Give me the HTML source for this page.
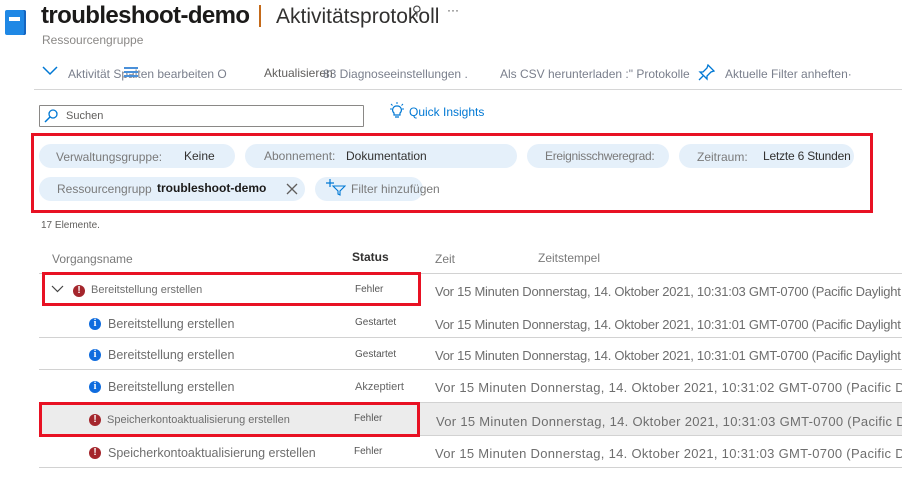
<!DOCTYPE html>
<html><head><meta charset="utf-8"><style>
*{margin:0;padding:0;box-sizing:border-box}
html,body{width:902px;height:486px;overflow:hidden}
body{background:#fff;font-family:"Liberation Sans","DejaVu Sans",sans-serif;position:relative;color:#605e5c}
#w{position:absolute;left:0;top:0;width:902px;height:486px;overflow:hidden}
.a{position:absolute;white-space:nowrap}
.pill{position:absolute;height:24px;background:#e5f0fa;border-radius:12px}
.line{position:absolute;left:39px;right:0;height:1px;background:#d2d2d2}
.red{position:absolute;border:3px solid #e81123}
.ts{font-size:13px;color:#6e6e6e;letter-spacing:-0.25px}
.ts2{font-size:13px;color:#6e6e6e;letter-spacing:0.3px}
.nm{font-size:12.5px;color:#6e6e6e}
.st{font-size:10px;color:#555}
.ic{position:absolute;width:12px;height:12px;border-radius:50%;color:#fff;font-size:10px;font-weight:bold;text-align:center;line-height:12px;font-family:"Liberation Serif",serif}
.err{background:#a4262c;font-family:"Liberation Sans",sans-serif}
.inf{background:#0f6cde}
</style></head><body><div id="w">
<div class="a" style="left:5px;top:10px;width:21px;height:25px;background:#1f88e5;border-radius:2px;box-shadow:inset -2px 0 0 #1565c0"></div>
<div class="a" style="left:9px;top:17px;width:11px;height:4px;background:#fff"></div>
<div class="a" style="left:41px;top:2px;font-size:24px;font-weight:bold;color:#1b1a19;letter-spacing:-0.6px">troubleshoot-demo</div>
<div class="a" style="left:259px;top:5px;width:2px;height:22px;background:#c46a1a"></div>
<div class="a" style="left:276px;top:5px;font-size:21px;color:#323130">Aktivitätsprotokoll</div>
<div class="a" style="left:412px;top:3px;font-size:13px;color:#444">⚲</div>
<div class="a" style="left:447px;top:3px;font-size:12px;color:#444">···</div>
<div class="a" style="left:42px;top:33px;font-size:12px;color:#8a8886">Ressourcengruppe</div>

<svg class="a" style="left:42px;top:66px" width="16" height="10"><path d="M1 1 L8 8 L15 1" stroke="#0078d4" stroke-width="1.5" fill="none"/></svg>
<div class="a" style="left:68px;top:67px;font-size:12px;color:#7a7f8c">Aktivität Spalten bearbeiten O</div>
<div class="a" style="left:124px;top:67px;width:14px;height:2px;background:#4a90d9;box-shadow:0 4px 0 #4a90d9,0 8px 0 #4a90d9"></div>
<div class="a" style="left:264px;top:66px;font-size:12px;color:#605e5c">Aktualisieren</div>
<div class="a" style="left:323px;top:67px;font-size:12px;color:#7a7f8c">83 Diagnoseeinstellungen .</div>
<div class="a" style="left:500px;top:67px;font-size:12px;color:#7a7f8c">Als CSV herunterladen :" Protokolle</div>
<svg class="a" style="left:698px;top:64px" width="17" height="17"><path d="M10 1 L16 7 L13 8 L9 12 L9 15 L2 8 L5 8 L9 4 Z M5 12 L1 16" stroke="#0078d4" stroke-width="1.3" fill="none"/></svg>
<div class="a" style="left:725px;top:67px;font-size:12px;color:#7a7f8c">Aktuelle Filter anheften·</div>
<div class="a" style="left:34px;top:89px;width:868px;height:1px;background:#d6d6d6"></div>

<div class="a" style="left:39px;top:105px;width:325px;height:22px;border:1px solid #8a8886;border-radius:1px"></div>
<svg class="a" style="left:44px;top:109px" width="14" height="14"><circle cx="9" cy="5" r="4" stroke="#0078d4" stroke-width="1.3" fill="none"/><path d="M6 8 L1 13" stroke="#0078d4" stroke-width="1.5"/></svg>
<div class="a" style="left:66px;top:110px;font-size:11px;color:#605e5c">Suchen</div>
<svg class="a" style="left:388px;top:102px" width="18" height="18"><path d="M9 4 a4 4 0 0 1 3 7 v2 h-6 v-2 a4 4 0 0 1 3 -7 Z M7 15 h4" stroke="#0078d4" stroke-width="1.2" fill="none"/><path d="M9 0v2 M2 7h2 M14 7h2 M3 2l1.5 1.5 M15 2l-1.5 1.5" stroke="#0078d4" stroke-width="1"/></svg>
<div class="a" style="left:409px;top:105px;font-size:12px;color:#0078d4">Quick Insights</div>

<div class="red" style="left:31px;top:133px;width:842px;height:80px"></div>
<div class="pill" style="left:39px;top:144px;width:196px"></div>
<div class="a" style="left:56px;top:150px;font-size:12px;color:#7a7a7a">Verwaltungsgruppe:</div>
<div class="a" style="left:184px;top:149px;font-size:12px;color:#323130">Keine</div>
<div class="pill" style="left:245px;top:144px;width:272px"></div>
<div class="a" style="left:264px;top:149px;font-size:12px;color:#7a7a7a">Abonnement:</div>
<div class="a" style="left:346px;top:149px;font-size:12px;color:#323130">Dokumentation</div>
<div class="pill" style="left:527px;top:144px;width:142px"></div>
<div class="a" style="left:545px;top:149px;font-size:12px;color:#7a7a7a;letter-spacing:-0.3px">Ereignisschweregrad:</div>
<div class="pill" style="left:679px;top:144px;width:175px"></div>
<div class="a" style="left:697px;top:150px;font-size:12px;color:#7a7a7a">Zeitraum:</div>
<div class="a" style="left:763px;top:149px;font-size:12px;color:#323130;letter-spacing:-0.2px">Letzte 6 Stunden</div>
<div class="pill" style="left:39px;top:177px;width:266px"></div>
<div class="a" style="left:57px;top:182px;font-size:12px;color:#7a7a7a">Ressourcengrupp</div>
<div class="a" style="left:157px;top:181px;font-size:12px;font-weight:bold;color:#1b1a19">troubleshoot-demo</div>
<svg class="a" style="left:286px;top:183px" width="12" height="12"><path d="M1 1L11 11M11 1L1 11" stroke="#605e5c" stroke-width="1.3"/></svg>
<div class="pill" style="left:315px;top:177px;width:108px"></div>
<svg class="a" style="left:326px;top:178px" width="20" height="18"><path d="M4 1v8M0 5h8" stroke="#0078d4" stroke-width="1.2"/><path d="M7 8h12l-5 5v4l-2-1v-3z" stroke="#0078d4" stroke-width="1.1" fill="none"/></svg>
<div class="a" style="left:351px;top:182px;font-size:12px;color:#7a7a7a">Filter hinzufügen</div>

<div class="a" style="left:41px;top:220px;font-size:10px;color:#605e5c">17 Elemente.</div>
<div class="a" style="left:52px;top:252px;font-size:12px;color:#7a7a7a">Vorgangsname</div>
<div class="a" style="left:352px;top:250px;font-size:12px;font-weight:bold;color:#323130">Status</div>
<div class="a" style="left:435px;top:252px;font-size:12px;color:#7a7a7a">Zeit</div>
<div class="a" style="left:538px;top:251px;font-size:12px;color:#7a7a7a">Zeitstempel</div>

<div class="line" style="top:273px"></div>
<div class="line" style="top:337px"></div>
<div class="line" style="top:369px"></div>
<div class="line" style="top:402px"></div>
<div class="line" style="top:435px"></div>
<div class="line" style="top:467px"></div>
<div class="a" style="left:39px;top:403px;width:863px;height:32px;background:#ececec"></div>

<svg class="a" style="left:51px;top:285px" width="13" height="8"><path d="M1 1L6.5 6.5L12 1" stroke="#444" stroke-width="1.2" fill="none"/></svg>
<div class="ic err" style="left:73px;top:285px">!</div>
<div class="a nm" style="left:91px;top:284px;font-size:11px">Bereitstellung erstellen</div>
<div class="a st" style="left:355px;top:284px">Fehler</div>
<div class="a ts" style="left:435px;top:284px">Vor 15 Minuten Donnerstag, 14. Oktober 2021, 10:31:03 GMT-0700 (Pacific Daylight Time)</div>

<div class="ic inf" style="left:89px;top:318px">i</div>
<div class="a nm" style="left:108px;top:317px">Bereitstellung erstellen</div>
<div class="a st" style="left:355px;top:317px">Gestartet</div>
<div class="a ts" style="left:435px;top:317px">Vor 15 Minuten Donnerstag, 14. Oktober 2021, 10:31:01 GMT-0700 (Pacific Daylight Time)</div>

<div class="ic inf" style="left:89px;top:349px">i</div>
<div class="a nm" style="left:108px;top:348px">Bereitstellung erstellen</div>
<div class="a st" style="left:355px;top:349px">Gestartet</div>
<div class="a ts" style="left:435px;top:348px">Vor 15 Minuten Donnerstag, 14. Oktober 2021, 10:31:01 GMT-0700 (Pacific Daylight Time)</div>

<div class="ic inf" style="left:89px;top:381px">i</div>
<div class="a nm" style="left:108px;top:380px">Bereitstellung erstellen</div>
<div class="a" style="left:355px;top:381px;font-size:11px;color:#666">Akzeptiert</div>
<div class="a ts2" style="left:435px;top:380px">Vor 15 Minuten Donnerstag, 14. Oktober 2021, 10:31:02 GMT-0700 (Pacific Daylight Time)</div>

<div class="ic err" style="left:89px;top:414px">!</div>
<div class="a nm" style="left:107px;top:414px;font-size:11px">Speicherkontoaktualisierung erstellen</div>
<div class="a st" style="left:354px;top:413px">Fehler</div>
<div class="a ts2" style="left:436px;top:414px">Vor 15 Minuten Donnerstag, 14. Oktober 2021, 10:31:03 GMT-0700 (Pacific Daylight Time)</div>

<div class="ic err" style="left:89px;top:447px">!</div>
<div class="a nm" style="left:108px;top:446px">Speicherkontoaktualisierung erstellen</div>
<div class="a st" style="left:354px;top:446px">Fehler</div>
<div class="a ts2" style="left:435px;top:446px">Vor 15 Minuten Donnerstag, 14. Oktober 2021, 10:31:03 GMT-0700 (Pacific Daylight Time)</div>

<div class="red" style="left:42px;top:272px;width:379px;height:34px"></div>
<div class="red" style="left:39px;top:402px;width:381px;height:35px"></div>
</div></body></html>
